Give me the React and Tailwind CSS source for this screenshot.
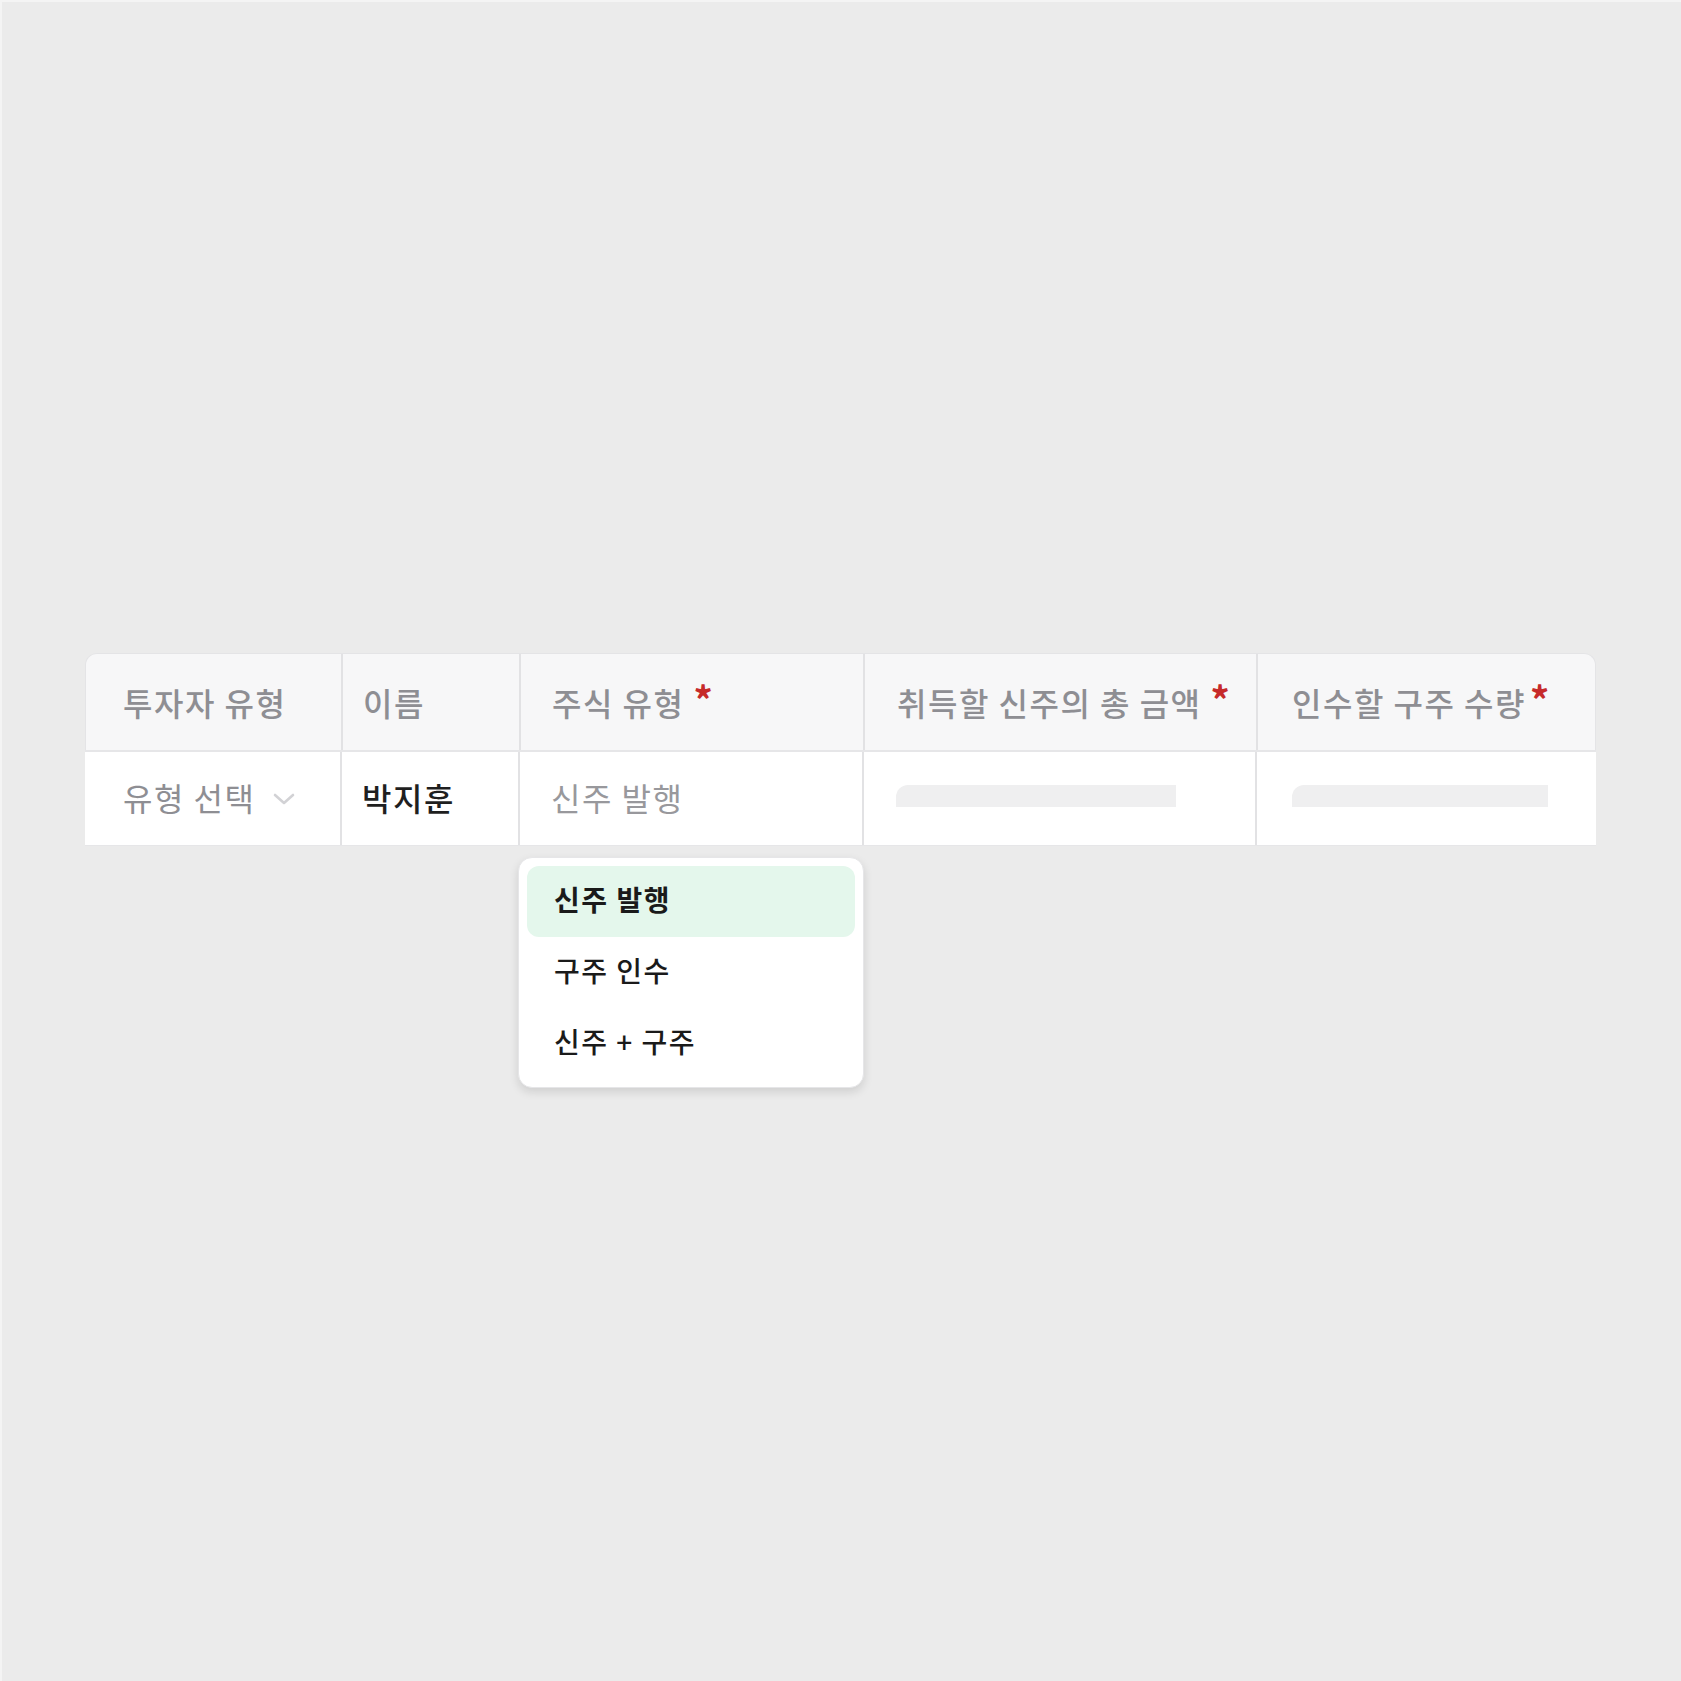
import React from "react";

const font = { fontFamily: '"Noto Sans CJK KR", "Noto Sans", sans-serif' };

function Asterisk({ gap = "ml-[9px]" }) {
  return (
    <span className={`relative -top-[3px] ${gap} text-[38px] font-bold leading-none tracking-normal text-[#c62a2a]`}>
      *
    </span>
  );
}

function Chevron() {
  return (
    <svg width="22" height="14" viewBox="0 0 22 14" fill="none" className="ml-[18px] mt-[4px]">
      <path d="M2 3l9 8 9-8" stroke="#d2d2d5" strokeWidth="2.6" strokeLinecap="round" strokeLinejoin="round" />
    </svg>
  );
}

export default function App() {
  const options = [
    { label: "신주 발행", active: true },
    { label: "구주 인수", active: false },
    { label: "신주 + 구주", active: false },
  ];

  return (
    <div
      className="min-h-[1681px] w-[1681px] bg-[#ebebeb] border-l-2 border-t-2 border-[#f4f4f4] pl-[83px] pt-[651px]"
      style={font}
    >
      <div className="relative w-[1511px]">
        {/* Header */}
        <div className="flex h-[97px] rounded-t-[12px] border border-b-0 border-[#e4e4e6] bg-[#f7f7f8] text-[32px] font-medium tracking-[1.5px] text-[#8e8e93]">
          <div className="flex w-[255px] items-center pl-[37px]">투자자 유형</div>
          <div className="flex w-[178px] items-center border-l-2 border-[#e2e2e4] pl-[20px]">이름</div>
          <div className="flex w-[344px] items-center border-l-2 border-[#e2e2e4] pl-[31px]">
            주식 유형
            <Asterisk />
          </div>
          <div className="flex w-[393px] items-center border-l-2 border-[#e2e2e4] pl-[32px]">
            취득할 신주의 총 금액
            <Asterisk />
          </div>
          <div className="flex flex-1 items-center border-l-2 border-[#e2e2e4] pl-[34px]">
            인수할 구주 수량
            <Asterisk gap="ml-[4px]" />
          </div>
        </div>

        {/* Row */}
        <div className="flex h-[96px] border-t-2 border-b border-[#e6e6e8] bg-white text-[32px] tracking-[1.5px]">
          <div className="flex w-[255px] items-center rounded-tl-[12px] pb-[3px] pl-[38px] text-[#8e8e93]">
            유형 선택
            <Chevron />
          </div>
          <div className="flex w-[178px] items-center border-l-2 border-[#e2e2e4] pb-[3px] pl-[20px] font-medium text-[#1f1f1f]">
            박지훈
          </div>
          <div className="flex w-[344px] items-center border-l-2 border-[#e2e2e4] pb-[3px] pl-[31px] text-[#98989c]">
            신주 발행
          </div>
          <div className="flex w-[393px] items-center border-l-2 border-[#e2e2e4] pl-[32px]">
            <div className="mb-[6px] h-[22px] w-[280px] rounded-tl-[12px] bg-[#efeff0]" />
          </div>
          <div className="flex flex-1 items-center border-l-2 border-[#e2e2e4] pl-[35px]">
            <div className="mb-[6px] h-[22px] w-[256px] rounded-tl-[12px] bg-[#efeff0]" />
          </div>
        </div>

        {/* Dropdown menu */}
        <div className="absolute left-[433px] top-[204px] w-[346px] rounded-[14px] border border-[#e6e6e8] bg-white p-2 shadow-[0_4px_10px_rgba(0,0,0,0.12)]">
          {options.map((o) => (
            <div
              key={o.label}
              className={`flex h-[71px] items-center rounded-[12px] pb-[6px] pl-[27px] text-[28px] tracking-[1.5px] text-[#1a1a1a] ${
                o.active ? "bg-[#e4f7ec] font-bold" : "font-medium"
              }`}
            >
              {o.label}
            </div>
          ))}
        </div>
      </div>
    </div>
  );
}
